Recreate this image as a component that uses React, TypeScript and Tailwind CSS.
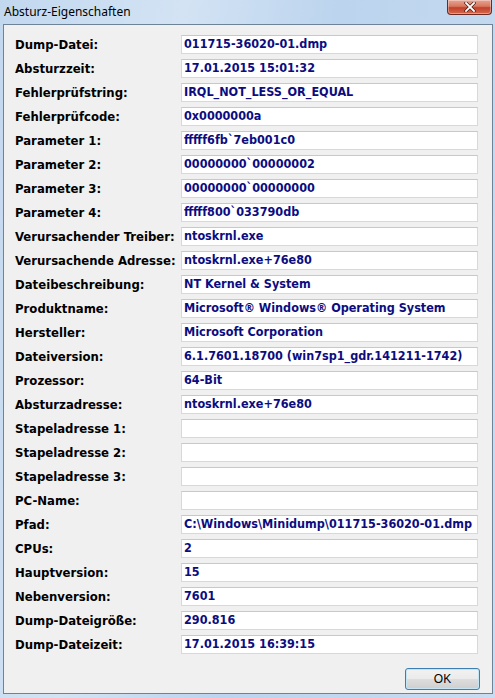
const ROWS: [string, string][] = [
  ['Dump-Datei:', '011715-36020-01.dmp'],
  ['Absturzzeit:', '17.01.2015 15:01:32'],
  ['Fehlerprüfstring:', 'IRQL_NOT_LESS_OR_EQUAL'],
  ['Fehlerprüfcode:', '0x0000000a'],
  ['Parameter 1:', 'fffff6fb`7eb001c0'],
  ['Parameter 2:', '00000000`00000002'],
  ['Parameter 3:', '00000000`00000000'],
  ['Parameter 4:', 'fffff800`033790db'],
  ['Verursachender Treiber:', 'ntoskrnl.exe'],
  ['Verursachende Adresse:', 'ntoskrnl.exe+76e80'],
  ['Dateibeschreibung:', 'NT Kernel & System'],
  ['Produktname:', 'Microsoft® Windows® Operating System'],
  ['Hersteller:', 'Microsoft Corporation'],
  ['Dateiversion:', '6.1.7601.18700 (win7sp1_gdr.141211-1742)'],
  ['Prozessor:', '64-Bit'],
  ['Absturzadresse:', 'ntoskrnl.exe+76e80'],
  ['Stapeladresse 1:', ''],
  ['Stapeladresse 2:', ''],
  ['Stapeladresse 3:', ''],
  ['PC-Name:', ''],
  ['Pfad:', 'C:\\Windows\\Minidump\\011715-36020-01.dmp'],
  ['CPUs:', '2'],
  ['Hauptversion:', '15'],
  ['Nebenversion:', '7601'],
  ['Dump-Dateigröße:', '290.816'],
  ['Dump-Dateizeit:', '17.01.2015 16:39:15'],
]

const tahoma = { fontFamily: '"DejaVu Sans Condensed", "DejaVu Sans", Verdana, sans-serif' }

export default function App() {
  return (
    <div className="flex h-[698px] w-[495px] flex-col overflow-hidden bg-[linear-gradient(100deg,#c2d8ef_0%,#d3e3f4_30%,#bcd4ee_55%,#c9dcf1_100%)]">
      {/* title bar */}
      <div className="relative flex h-[24px] shrink-0 items-center pl-[4px]">
        <span className="text-[12px] text-black" style={{ fontFamily: '"Noto Sans", "Open Sans", sans-serif' }}>
          Absturz-Eigenschaften
        </span>
        <button
          type="button"
          className="absolute right-[3px] top-0 flex h-[15px] w-[45px] items-center justify-center rounded-b-[4px] border border-t-0 border-[#6e2a22] bg-[linear-gradient(#e8a493_0%,#d8775f_45%,#c2402a_55%,#d46a4e_100%)] shadow-[inset_0_0_0_1px_rgba(255,255,255,0.35)]"
        >
          <svg viewBox="0 0 12 10" width={12} height={10}>
            <path d="M2 1l8 8M10 1L2 9" stroke="#4a1a14" strokeWidth={3.2} strokeLinecap="square" />
            <path d="M2 1l8 8M10 1L2 9" stroke="#fff" strokeWidth={1.8} strokeLinecap="square" />
          </svg>
        </button>
      </div>

      {/* client area */}
      <div className="mb-[4px] ml-[3px] mr-[2px] flex flex-1 flex-col border border-[#6f8397] bg-[#f0f0f0]">
        <div className="flex flex-col gap-[5px] pl-[11px] pt-[10px]" style={tahoma}>
          {ROWS.map(([label, value]) => (
            <div key={label} className="flex h-[19px] items-center">
              <span className="w-[166px] shrink-0 whitespace-nowrap text-[13px] font-bold leading-none text-black">
                {label}
              </span>
              <div className="flex h-[19px] w-[297px] items-center overflow-hidden border border-[#d8d8d8] border-t-[#c8c8c8] bg-white pl-[2px]">
                <span className="whitespace-nowrap text-[12.5px] font-bold leading-none text-[#0c0c80]">
                  {value}
                </span>
              </div>
            </div>
          ))}
        </div>
        <div className="flex justify-end pr-[12px] pt-[14px]">
          <button
            type="button"
            className="flex h-[22px] w-[75px] items-center justify-center rounded-[3px] border border-[#3c7fb1] bg-[linear-gradient(#f2f2f2_0%,#ebebeb_48%,#dddddd_52%,#cfcfcf_100%)] text-[12px] text-black shadow-[inset_0_0_0_1px_#c4e5f6]"
            style={{ fontFamily: '"Liberation Sans", Arial, sans-serif' }}
          >
            OK
          </button>
        </div>
      </div>
    </div>
  )
}
